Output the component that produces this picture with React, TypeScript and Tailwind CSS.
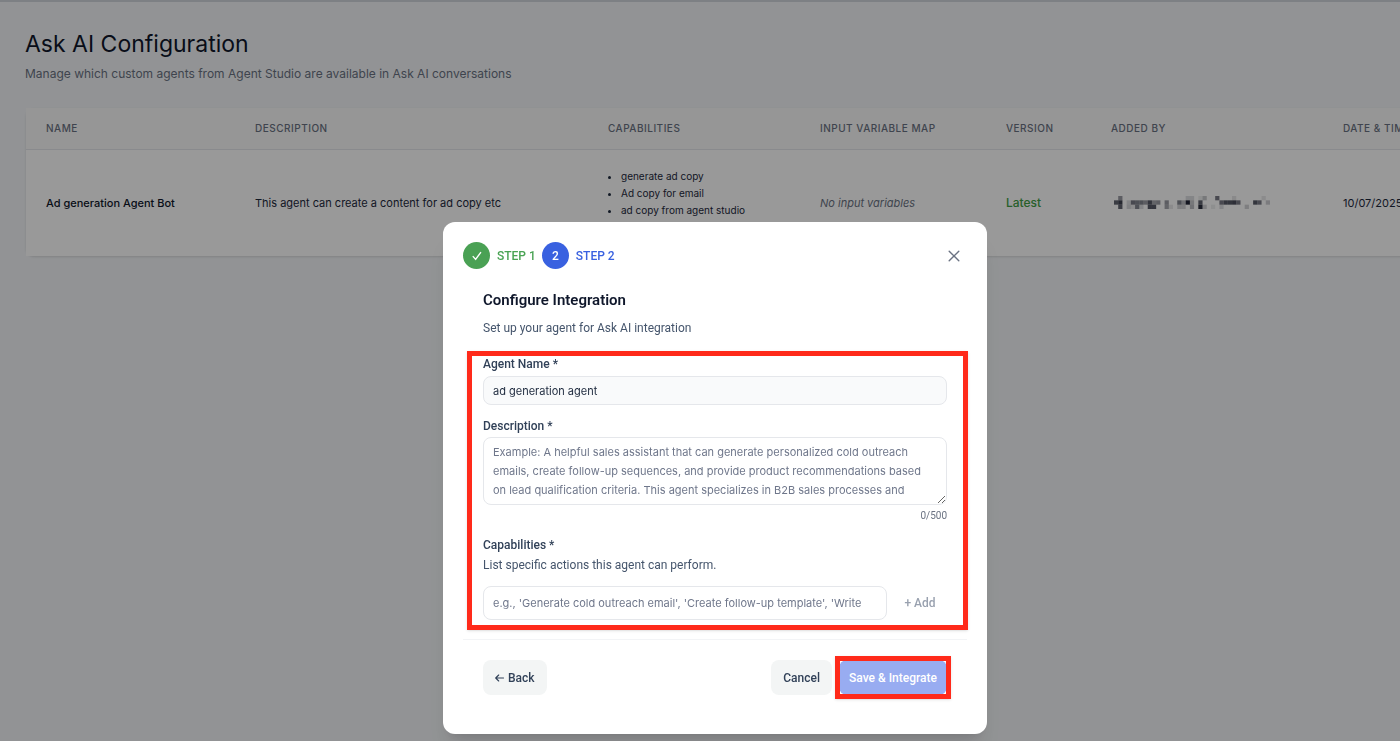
import React, { useState } from "react";

type Cell = [number, number, number];

// [column, row, darkness in percent] for the masked name
const maskCells: Cell[] = [
  [1, 0, 45], [0, 1, 70], [1, 1, 85], [1, 2, 70],
  [3, 1, 15], [4, 1, 60], [5, 1, 55], [6, 1, 55], [7, 1, 45], [8, 1, 75], [9, 1, 40], [10, 1, 45],
  [3, 2, 18], [4, 2, 10], [5, 2, 55], [6, 2, 15], [8, 2, 75], [9, 2, 75],
  [12, 1, 45], [12, 2, 40], [13, 2, 10],
  [15, 1, 55], [16, 1, 30], [17, 0, 15], [18, 0, 15], [17, 1, 98], [15, 2, 20], [16, 2, 20], [18, 2, 30],
  [18, 1, 25], [20, 1, 70], [20, 2, 95], [21, 0, 25], [21, 2, 20], [20, 0, 8],
  [24, 0, 60], [25, 1, 60], [26, 1, 75], [27, 1, 75], [28, 1, 80], [29, 1, 60], [28, 0, 12], [25, 2, 15], [23, 2, 8],
  [31, 2, 20], [33, 1, 75], [34, 1, 60], [35, 0, 10], [36, 1, 22],
];

const th = "pl-5 text-left text-[10px] font-medium uppercase tracking-wider text-gray-500";
const label = "block font-[Roboto,sans-serif] text-xs leading-4 font-medium text-slate-700";
const field = "block w-full rounded-lg border border-gray-200 px-[9px] text-[11px] text-slate-800 placeholder:text-[#6f778b] outline-none";
const highlight = "pointer-events-none absolute border-[5px] border-[#ff2a1a] shadow-sm";

function MaskedName() {
  return (
    <svg width="156" height="13" viewBox="0 0 37 3" preserveAspectRatio="none" role="img" aria-label="Hidden name">
      {maskCells.map(([x, y, o]) => (
        <rect key={`${x}-${y}`} x={x} y={y} width="1" height="1" fill="#1e2233" fillOpacity={o / 100} />
      ))}
    </svg>
  );
}

function AgentTable() {
  return (
    <div className="mt-6 ml-[26px] w-[1560px] rounded-lg shadow-sm">
      <table className="w-full table-fixed border-collapse bg-white">
        <colgroup>
          <col className="w-[209px]" />
          <col className="w-[353px]" />
          <col className="w-[212px]" />
          <col className="w-[186px]" />
          <col className="w-[105px]" />
          <col className="w-[232px]" />
          <col />
        </colgroup>
        <thead>
          <tr className="h-[41px] border-b border-gray-200 bg-[#fafafa]">
            <th className={th}>Name</th>
            <th className={th}>Description</th>
            <th className={th}>Capabilities</th>
            <th className={th}>Input Variable Map</th>
            <th className={th}>Version</th>
            <th className={th}>Added By</th>
            <th className={th}>Date &amp; Time</th>
          </tr>
        </thead>
        <tbody>
          <tr className="h-[107px] text-[11px] text-slate-800">
            <td className="pl-5 font-medium text-slate-900">Ad generation Agent Bot</td>
            <td className="pl-5">This agent can create a content for ad copy etc</td>
            <td className="pl-5">
              <ul className="h-[70px] list-disc pl-[13px] text-[10px] leading-[17px]">
                <li>generate ad copy</li>
                <li>Ad copy for email</li>
                <li>ad copy from agent studio</li>
              </ul>
            </td>
            <td className="pl-5 text-gray-500 italic">No input variables</td>
            <td className="pl-5 text-xs font-medium text-[#43a047]">Latest</td>
            <td className="pl-[23px]"><MaskedName /></td>
            <td className="pl-5">10/07/2025</td>
          </tr>
        </tbody>
      </table>
    </div>
  );
}

function Steps() {
  return (
    <ol className="flex items-center gap-[6px] font-[Roboto,sans-serif] text-xs font-medium">
      <li className="flex items-center gap-[7px] text-[#4aa354]">
        <span className="flex size-[27px] items-center justify-center rounded-full bg-[#4aa154]">
          <svg width="10" height="10" viewBox="0 0 10 10" fill="none" stroke="white" strokeWidth="1.4" strokeLinecap="round" strokeLinejoin="round" aria-hidden="true">
            <path d="M1.2 5.6 3.6 8.4 8.6 1.6" />
          </svg>
        </span>
        STEP 1
      </li>
      <li className="flex items-center gap-[7px] text-[#3961e0]">
        <span className="flex size-[27px] items-center justify-center rounded-full bg-[#3961e0] text-white">2</span>
        STEP 2
      </li>
    </ol>
  );
}

function ConfigureDialog() {
  const [name, setName] = useState("ad generation agent");
  const [description, setDescription] = useState("");
  const [capability, setCapability] = useState("");

  return (
    <div role="dialog" aria-modal="true" aria-labelledby="dialog-title" className="relative mt-[222px] w-[544px] self-start rounded-xl bg-white px-5 pt-5 pb-[39px] shadow-xl">
      <header className="flex items-center justify-between">
        <Steps />
        <button type="button" aria-label="Close" className="mr-[3px] flex size-5 items-center justify-center text-gray-500">
          <svg width="12" height="12" viewBox="0 0 12 12" stroke="currentColor" strokeWidth="1.4" strokeLinecap="round" aria-hidden="true">
            <path d="M1.2 1.2 10.8 10.8M10.8 1.2 1.2 10.8" />
          </svg>
        </button>
      </header>
      <form onSubmit={(e) => e.preventDefault()}>
        <div className="px-5 pt-[21px] pb-[19px]">
          <h2 id="dialog-title" className="font-[Roboto,sans-serif] text-[15px] leading-5 font-semibold text-slate-900">Configure Integration</h2>
          <p className="mt-2 font-[Roboto,sans-serif] text-xs leading-5 text-slate-600">Set up your agent for Ask AI integration</p>

          <div className="relative mt-[18px]">
            <label htmlFor="agent-name" className={label}>Agent Name *</label>
            <input id="agent-name" value={name} onChange={(e) => setName(e.target.value)} className={`${field} mt-1 h-[29px] bg-[#f9fafb]`} />

            <label htmlFor="description" className={`${label} mt-[13px]`}>Description *</label>
            <textarea
              id="description"
              value={description}
              onChange={(e) => setDescription(e.target.value)}
              placeholder="Example: A helpful sales assistant that can generate personalized cold outreach emails, create follow-up sequences, and provide product recommendations based on lead qualification criteria. This agent specializes in B2B sales processes and"
              className={`${field} mt-[3px] h-[68px] resize overflow-hidden pt-[5px] leading-[19px]`}
            />
            <p className="mt-1 text-right font-[Roboto,sans-serif] text-[10px] leading-[14px] text-gray-500">0/500</p>

            <label htmlFor="capability" className={`${label} mt-[14px]`}>Capabilities *</label>
            <p className="mt-1 font-[Roboto,sans-serif] text-xs leading-4 text-slate-600">List specific actions this agent can perform.</p>
            <div className="mt-[13px] flex gap-[6px]">
              <input id="capability" value={capability} onChange={(e) => setCapability(e.target.value)} placeholder="e.g., 'Generate cold outreach email', 'Create follow-up template', 'Write" className={`${field} h-[34px] min-w-0 flex-1`} />
              <button type="button" className="w-[54px] rounded-lg font-[Roboto,sans-serif] text-xs font-medium text-gray-400">+ Add</button>
            </div>
            <div className={`${highlight} -top-[5px] -right-[21px] -bottom-[10px] -left-[16px]`} />
          </div>
        </div>
        <footer className="flex items-center border-t border-gray-100 px-5 pt-5 font-[Roboto,sans-serif] text-xs font-medium text-slate-700">
          <button type="button" className="flex h-[35px] items-center gap-1 rounded-lg bg-[#f3f5f5] px-3">
            <svg width="9" height="8" viewBox="0 0 9 8" fill="none" stroke="currentColor" strokeWidth="1.1" strokeLinecap="round" strokeLinejoin="round" aria-hidden="true">
              <path d="M8.5 4H.7M3.7 1 .7 4l3 3" />
            </svg>
            Back
          </button>
          <button type="button" className="ml-auto h-[35px] rounded-lg bg-[#f3f5f5] px-3">Cancel</button>
          <div className="relative ml-[7px]">
            <button type="submit" className="block h-[35px] w-[108px] rounded-lg bg-[#98acf1] text-white">Save &amp; Integrate</button>
            <div className={`${highlight} -inset-1`} />
          </div>
        </footer>
      </form>
    </div>
  );
}

export default function App() {
  return (
    <div className="h-screen overflow-hidden bg-[#f4f6f9] font-[Inter,sans-serif]">
      <main className="border-t-2 border-gray-300">
        <header className="px-[25px] pt-[26px]">
          <h1 className="text-[23px] leading-8 text-slate-900">Ask AI Configuration</h1>
          <p className="mt-1 text-xs leading-5 text-gray-500">Manage which custom agents from Agent Studio are available in Ask AI conversations</p>
        </header>
        <AgentTable />
      </main>
      <div className="fixed inset-0 flex justify-center overflow-hidden bg-black/40 pl-[30px]">
        <ConfigureDialog />
      </div>
    </div>
  );
}
